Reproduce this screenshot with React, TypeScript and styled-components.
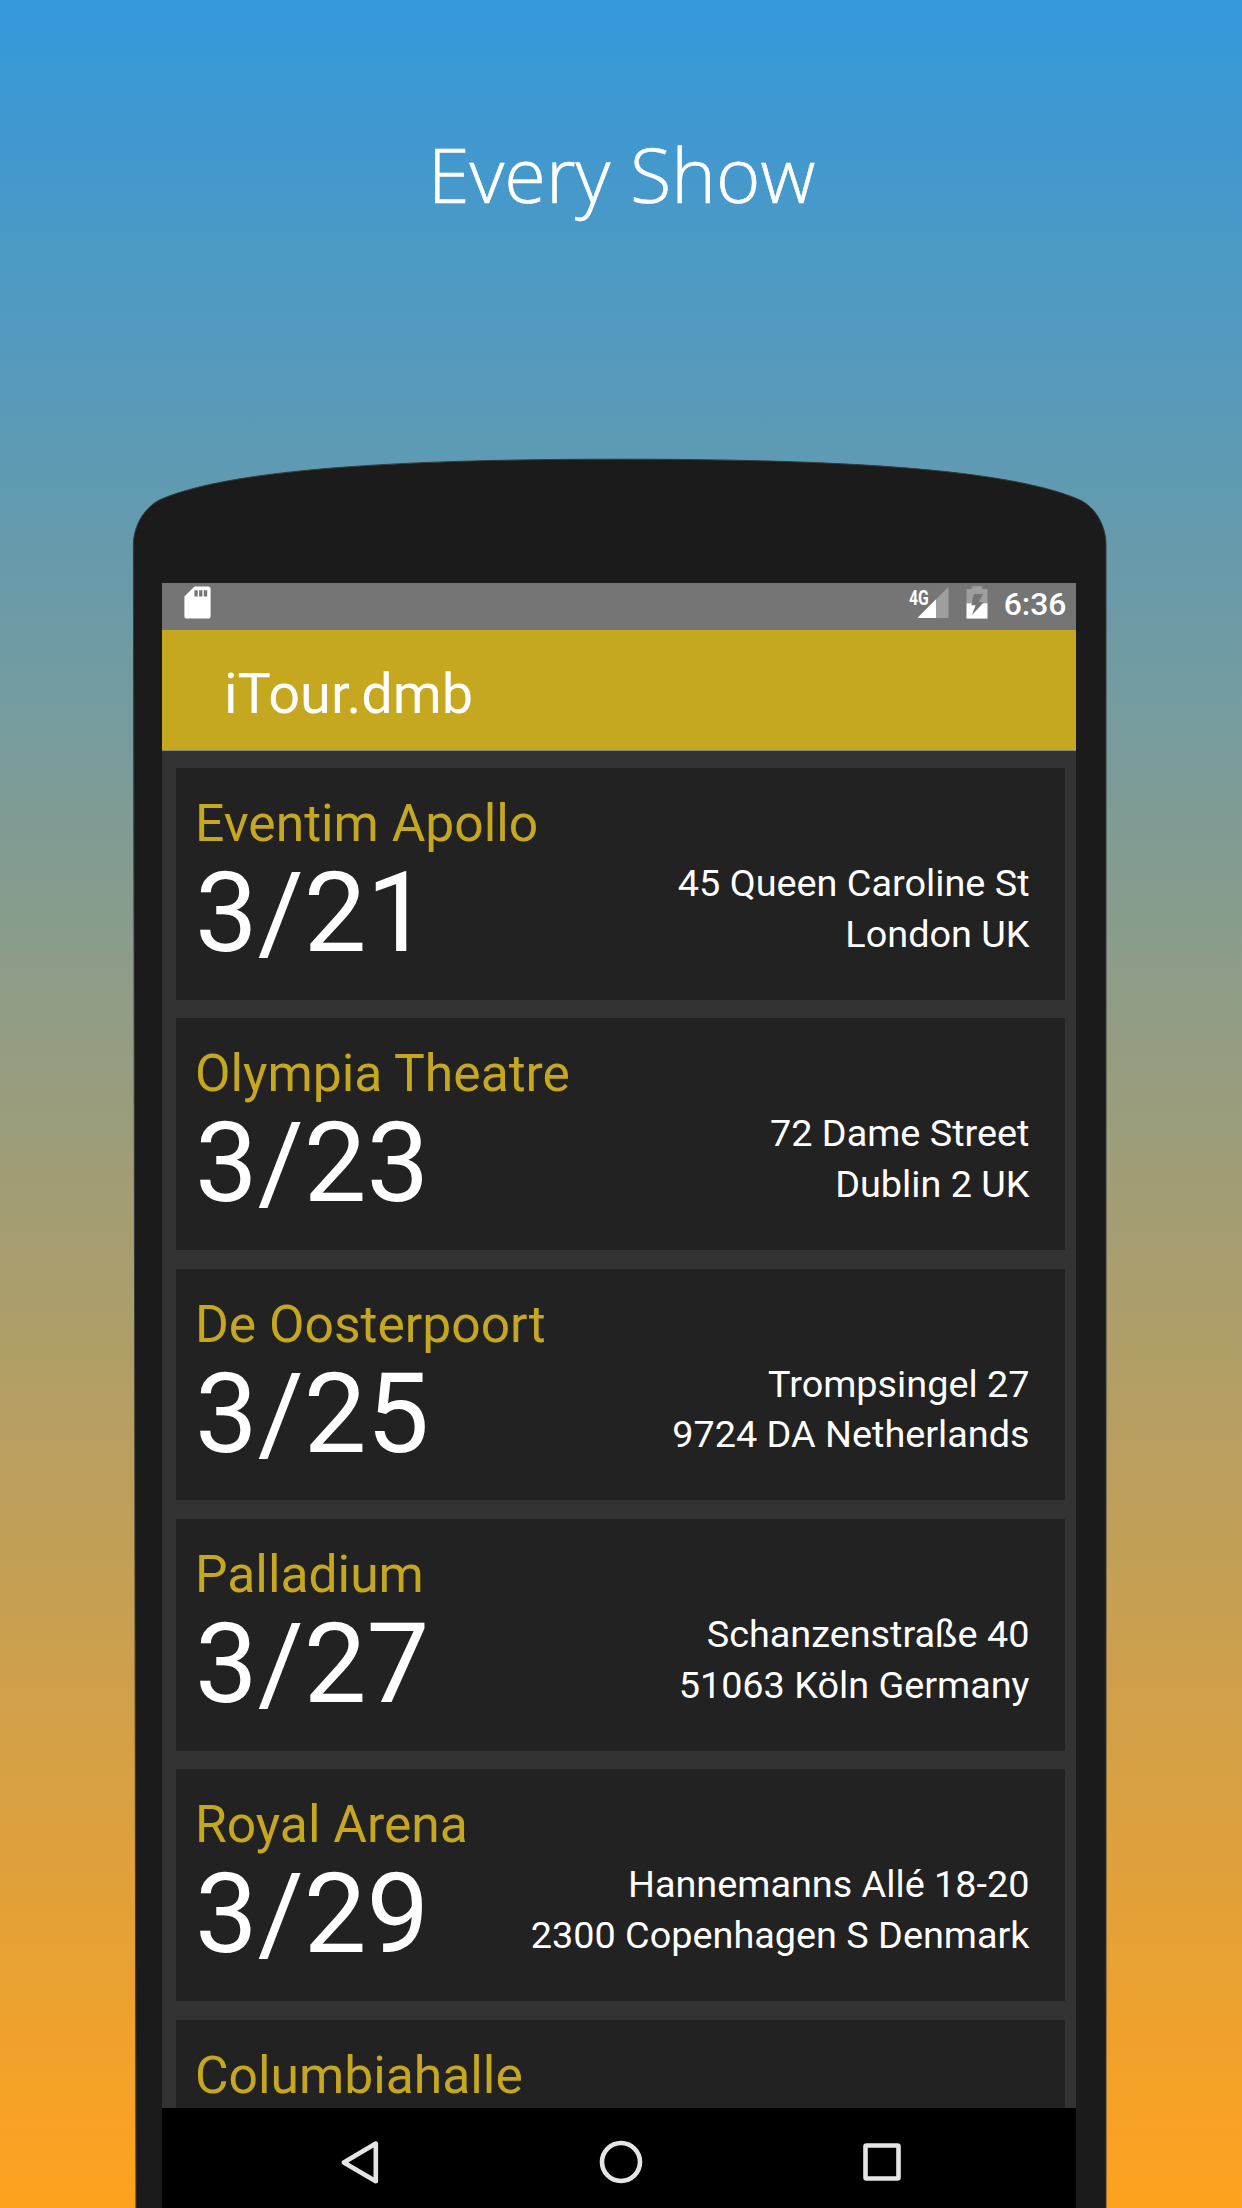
import React from "react";
import styled, { createGlobalStyle } from "styled-components";

const GlobalStyle = createGlobalStyle`
  *, *::before, *::after { box-sizing: border-box; }
  html, body { margin: 0; padding: 0; }
  body { font-family: Roboto, "Noto Sans", sans-serif; }
`;

const gold = "#c6a720";

const Poster = styled.main`
  display: flex;
  flex-direction: column;
  align-items: flex-start;
  width: 1242px;
  height: 2208px;
  overflow: hidden;
  background: linear-gradient(180deg, #3498db 0%, #ffa21e 100%);
`;

const Headline = styled.h1`
  flex: none;
  width: 100%;
  height: 458px;
  margin: 0;
  padding: 124px 0 0 1px;
  font: 300 75.8px/100px "Open Sans", "Noto Sans", sans-serif;
  text-align: center;
  color: #fff;
  -webkit-text-stroke: 0.6px #fff;
`;

const Phone = styled.section`
  position: relative;
  flex: none;
  width: 975px;
  height: 1750px;
  margin-left: 132px;
  padding: 125px 31px 0 30px;
`;

const PhoneBody = styled.svg`
  position: absolute;
  inset: 0;
  width: 100%;
  height: 100%;
`;

const Screen = styled.div`
  position: relative;
  display: flex;
  flex-direction: column;
  width: 913.5px;
  height: 1625px;
  overflow: hidden;
  background: #333;
`;

const StatusBar = styled.div`
  display: flex;
  flex: none;
  align-items: flex-start;
  justify-content: space-between;
  height: 47px;
  padding: 0 9px 0 22px;
  background: #757575;
`;

const StatusGroup = styled.div`
  display: flex;
  align-items: flex-start;
`;

const StatusIcon = styled.svg<{ $w: number }>`
  display: block;
  width: ${(p) => p.$w}px;
  height: 33px;
  margin-top: 3px;
`;

const Signal = styled.div`
  position: relative;
  width: 40px;
  margin-right: 17.5px;
`;

const NetworkLabel = styled.span`
  position: absolute;
  left: 0.5px;
  top: 3.5px;
  font-size: 20px;
  line-height: 22px;
  font-weight: 700;
  color: #fff;
  transform: scaleX(0.79);
  transform-origin: left;
`;

const Clock = styled.time`
  margin-left: 15.5px;
  font-size: 31.9px;
  line-height: 42px;
  font-weight: 500;
  color: #fff;
`;

const AppBar = styled.header`
  display: flex;
  flex: none;
  align-items: center;
  height: 121px;
  padding: 7px 0 0 62px;
  border-bottom: 1px solid #8c8770;
  background: ${gold};
`;

const AppTitle = styled.h2`
  margin: 0;
  font-size: 55.9px;
  line-height: 66px;
  font-weight: 400;
  color: #fff;
`;

const ShowList = styled.ul`
  display: flex;
  flex: 1;
  flex-direction: column;
  gap: 18.8px;
  min-height: 0;
  margin: 0;
  padding: 17.2px 10.5px 0 14px;
  overflow: hidden;
  list-style: none;
`;

const Card = styled.li`
  flex: none;
  height: 231.5px;
  padding: 27px 35.5px 0 19px;
  background: #222;
`;

const Venue = styled.h3`
  margin: 0;
  font-size: 51.6px;
  line-height: 58px;
  font-weight: 400;
  color: ${gold};
`;

const Details = styled.div`
  display: flex;
  align-items: flex-start;
  justify-content: space-between;
  color: #fff;
`;

const ShowDate = styled.time`
  font-size: 111.6px;
  line-height: 119px;
`;

const Address = styled.address`
  display: flex;
  flex-direction: column;
  align-items: flex-end;
  padding-top: 4.9px;
  font-size: 37.8px;
  line-height: 50.6px;
  font-style: normal;
  white-space: nowrap;
`;

const NavBar = styled.nav`
  display: flex;
  flex: none;
  gap: 217px;
  height: 100px;
  padding: 32px 0 0 175.6px;
  background: #000;
`;

const NavIcon = styled.svg`
  display: block;
  width: 44px;
  height: 44px;
  fill: none;
  stroke: #e5e5e5;
  stroke-width: 4.6;
  stroke-linejoin: round;
`;

type Show = { venue: string; date?: string; street?: string; city?: string };

const shows: Show[] = [
  { venue: "Eventim Apollo", date: "3/21", street: "45 Queen Caroline St", city: "London UK" },
  { venue: "Olympia Theatre", date: "3/23", street: "72 Dame Street", city: "Dublin 2 UK" },
  { venue: "De Oosterpoort", date: "3/25", street: "Trompsingel 27", city: "9724 DA Netherlands" },
  { venue: "Palladium", date: "3/27", street: "Schanzenstraße 40", city: "51063 Köln Germany" },
  { venue: "Royal Arena", date: "3/29", street: "Hannemanns Allé 18-20", city: "2300 Copenhagen S Denmark" },
  { venue: "Columbiahalle" },
];

function ShowCard({ venue, date, street, city }: Show) {
  return (
    <Card>
      <Venue>{venue}</Venue>
      {date && (
        <Details>
          <ShowDate>{date}</ShowDate>
          <Address>
            <span>{street}</span>
            <span>{city}</span>
          </Address>
        </Details>
      )}
    </Card>
  );
}

export default function App() {
  return (
    <Poster>
      <GlobalStyle />
      <Headline>Every Show</Headline>
      <Phone>
        <PhoneBody viewBox="132 458 975 1750" aria-hidden="true">
          <path
            d="M136 2220L133.400 545C133.400 524 146 506.500 160 499.700C235 467 420 459.200 620 459.200C820 459.200 1005 467 1080 500C1094 506.500 1106 524 1106 545V2220Z"
            fill="#1b1b1b"
            stroke="#35393a"
            strokeWidth="1"
          />
        </PhoneBody>
        <Screen>
          <StatusBar>
            <StatusIcon $w={27} viewBox="0 0 27 33">
              <path
                fill="#fff"
                fillRule="evenodd"
                d="M10.500.400H24a2.600 2.600 0 0 1 2.600 2.600v27a2.600 2.600 0 0 1-2.600 2.600H3A2.600 2.600 0 0 1 .400 30V10.500ZM10.400 4.200V10.400H13.700V4.200ZM15.100 4.200V10.400H18.400V4.200ZM19.800 4.200V10.400H23.200V4.200Z"
              />
            </StatusIcon>
            <StatusGroup>
              <Signal>
                <StatusIcon $w={40} viewBox="0 0 40 33">
                  <path fill="#9e9e9e" d="M39.500.800V32H27V13.300Z" />
                  <path fill="#fff" d="M27 13.300V32H8.300Z" />
                </StatusIcon>
                <NetworkLabel>4G</NetworkLabel>
              </Signal>
              <StatusIcon $w={22} viewBox="0 0 22 33">
                <path fill="#9e9e9e" d="M.500 3H5.800V.200H16.200V3H21.500V17.500H.500Z" />
                <path fill="#fff" d="M.500 17.300H21.500V32.600H.500Z" />
                <path fill="#757575" d="M7.800 8H17.200L12.600 16.300H17.800L5.800 29.300L9.600 19.200H5.400Z" />
              </StatusIcon>
              <Clock>6:36</Clock>
            </StatusGroup>
          </StatusBar>
          <AppBar>
            <AppTitle>iTour.dmb</AppTitle>
          </AppBar>
          <ShowList>
            {shows.map((show) => (
              <ShowCard key={show.venue} {...show} />
            ))}
          </ShowList>
          <NavBar>
            <NavIcon viewBox="0 0 44 44">
              <path d="M5.800 22.400L37.800 3.600V41.200Z" />
            </NavIcon>
            <NavIcon viewBox="0 0 44 44">
              <circle cx="22" cy="22" r="19" />
            </NavIcon>
            <NavIcon viewBox="0 0 44 44">
              <rect x="5.500" y="5.500" width="33" height="33" rx="1" />
            </NavIcon>
          </NavBar>
        </Screen>
      </Phone>
    </Poster>
  );
}
